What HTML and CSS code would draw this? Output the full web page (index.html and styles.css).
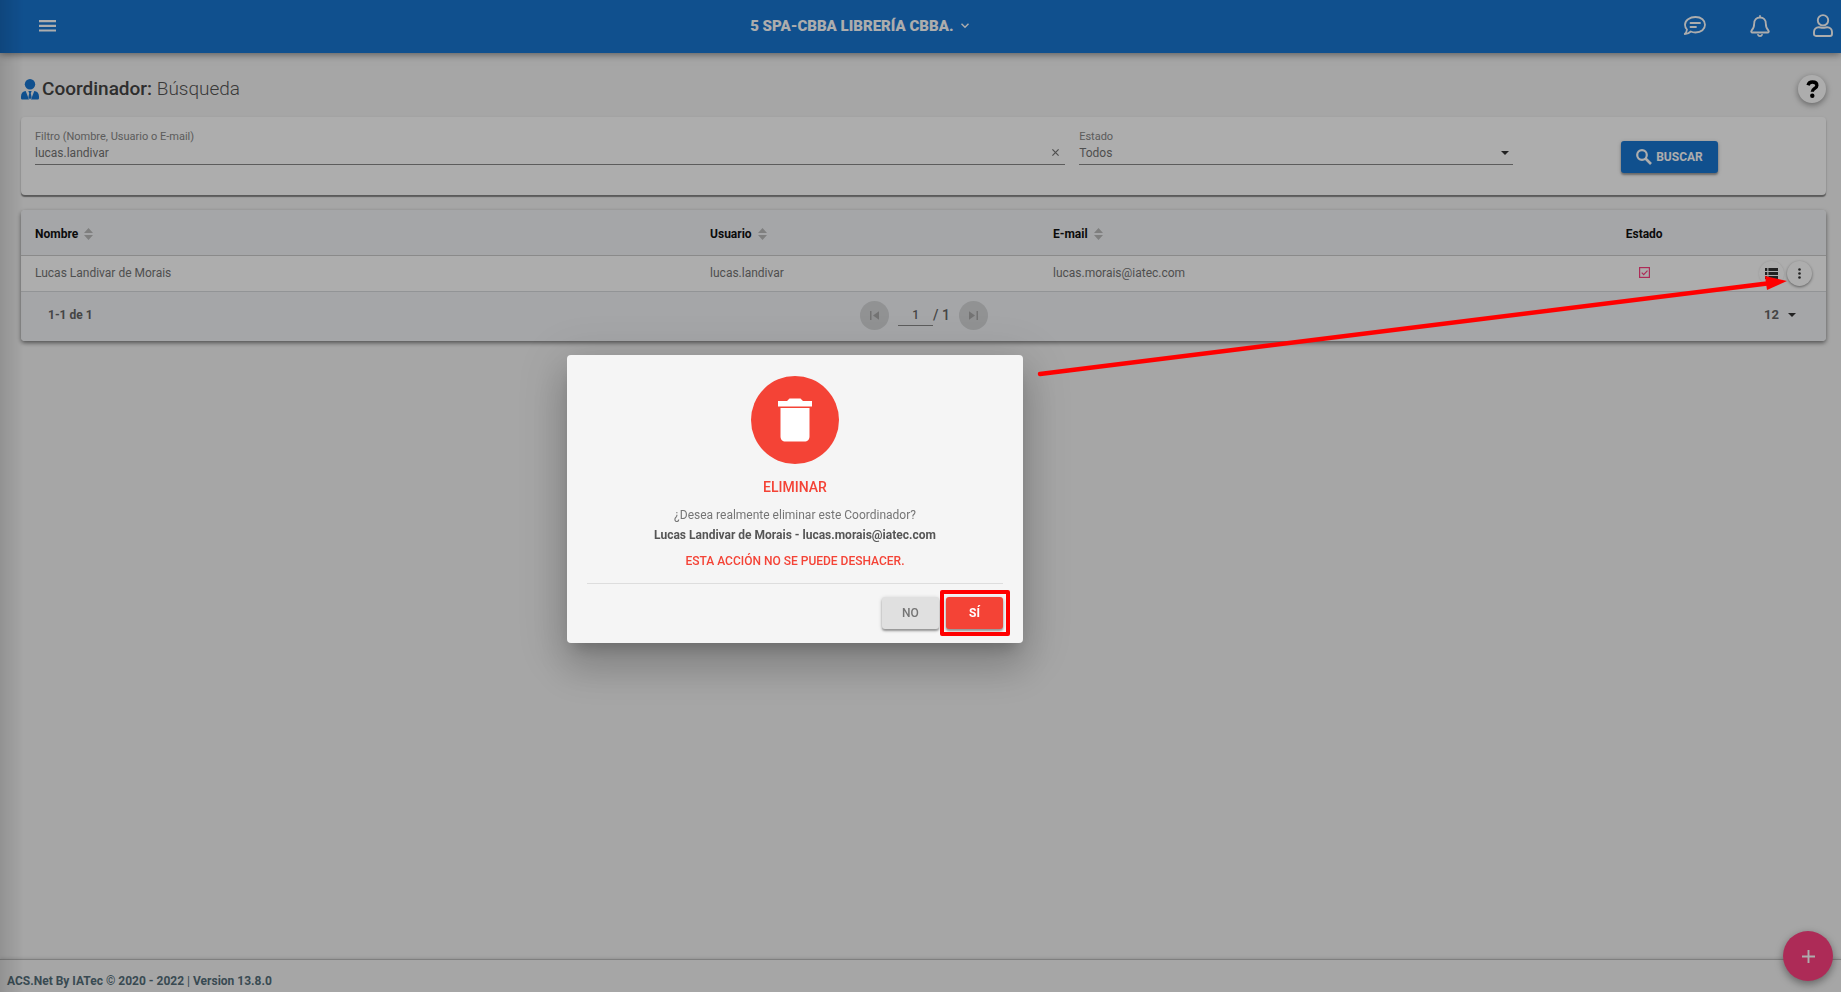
FILE: index.html
```html
<!DOCTYPE html>
<html lang="es">
<head>
<meta charset="utf-8">
<title>Coordinador: Búsqueda</title>
<link rel="stylesheet" href="styles.css">
</head>
<body>
<div class="app">
  <header class="topbar">
    <button class="icon-btn" type="button" aria-label="Menú">
      <svg width="17" height="12" viewBox="0 0 17 12" fill="currentColor"><path d="M0 0h17v2.200H0zM0 4.700h17v2.200H0zM0 9.400h17v2.200H0z"/></svg>
    </button>
    <button class="entity" type="button">5 SPA-CBBA LIBRERÍA CBBA.
      <svg width="8" height="6" viewBox="0 0 8 6" fill="none" stroke="currentColor" stroke-width="1.400"><path d="M.5.7 4 4.300 7.500.7"/></svg>
    </button>
    <nav class="tools">
      <button class="icon-btn" type="button" aria-label="Mensajes">
        <svg width="24" height="22" viewBox="0 0 24 22" fill="none" stroke="currentColor" stroke-width="1.800" stroke-linecap="round" stroke-linejoin="round"><path d="M12.500 2C18.300 2 22 5.300 22 9.700S18.300 17.500 12.500 17.500c-1.700 0-3.300-.3-4.700-1C6.300 18 4.200 19 1.800 19c1.300-1.300 2-2.900 2.200-4.500C2.700 13.100 2 11.500 2 9.700 2 5.300 6.700 2 12.500 2z"/><path d="M7.500 8h9.500M7.500 12h5.500"/></svg>
      </button>
      <button class="icon-btn" type="button" aria-label="Notificaciones">
        <svg width="20" height="22" viewBox="0 0 20 22" fill="none" stroke="currentColor" stroke-width="1.800" stroke-linecap="round" stroke-linejoin="round"><path d="M10 1v1.500M10 2.500c-3.600 0-5.800 2.600-5.800 6 0 4.300-1.300 5.700-2.600 7-.8.900-.3 2 .8 2h15.200c1.100 0 1.600-1.100.8-2-1.300-1.300-2.600-2.700-2.600-7 0-3.400-2.200-6-5.800-6zM8 19.800c.3.900 1 1.300 2 1.300s1.700-.4 2-1.300"/></svg>
      </button>
      <button class="icon-btn" type="button" aria-label="Cuenta">
        <svg width="20" height="23" viewBox="0 0 20 23" fill="none" stroke="currentColor" stroke-width="1.900" stroke-linejoin="round"><circle cx="10" cy="6.300" r="5.200"/><path d="M5.700 13.200c1.700 0 2.200.7 4.300.7s2.600-.7 4.300-.7c2.700 0 4.700 2.100 4.700 4.800v2c0 1.200-.8 2-2 2H3c-1.200 0-2-.8-2-2v-2c0-2.700 2-4.800 4.700-4.800z"/></svg>
      </button>
    </nav>
  </header>

  <main class="page">
    <div class="title-row">
      <h1 class="title">
        <svg width="18" height="21" viewBox="0 0 18 21" fill="currentColor"><circle cx="9" cy="5.300" r="5.200"/><path d="M4.700 12 8 20.500H1.500C.7 20.500 0 20 0 19v-1.600C0 14.300 2 12.200 4.700 12zM13.300 12 10 20.500h6.500c.8 0 1.500-.5 1.500-1.500v-1.600c0-3.100-2-5.200-4.700-5.400zM7.300 12h3.400l-.9 2.200.8 4-1.600 2.300-1.600-2.300.8-4z"/></svg>
        <span><b>Coordinador:</b> Búsqueda</span>
      </h1>
      <button class="help" type="button" aria-label="Ayuda">
        <svg width="13" height="18" viewBox="0 0 13 18"><path d="M2 5.200C2.600 3.100 4.200 2 6.400 2 9 2 10.900 3.300 10.900 5.400c0 3.200-4.600 2.700-4.600 6.400" fill="none" stroke="currentColor" stroke-width="3.300"/><circle cx="6.300" cy="15.700" r="2.200" fill="currentColor"/></svg>
      </button>
    </div>

    <form class="card filters">
      <div class="field">
        <label for="filter">Filtro (Nombre, Usuario o E-mail)</label>
        <div class="control">
          <input id="filter" type="text" value="lucas.landivar">
          <button class="clear" type="button" aria-label="Limpiar"><svg width="7" height="7" viewBox="0 0 7 7" stroke="currentColor" stroke-width="1.200"><path d="M.4.4l6.200 6.200M6.600.4.4 6.600"/></svg></button>
        </div>
      </div>
      <div class="field">
        <label for="state">Estado</label>
        <div class="control">
          <select id="state"><option>Todos</option></select>
          <svg class="caret" width="8" height="4" viewBox="0 0 8 4"><path d="M0 0h8L4 4z"/></svg>
        </div>
      </div>
      <button class="btn search" type="button">
        <svg width="16" height="16" viewBox="0 0 16 16" fill="none" stroke="currentColor" stroke-width="2.200"><circle cx="6" cy="6" r="4.800"/><path d="M9.500 9.500l5.500 5.500" stroke-width="2.600"/></svg>
        BUSCAR
      </button>
    </form>

    <section class="card results">
      <table>
        <thead>
          <tr>
            <th class="c-name">Nombre <svg class="sort" width="9" height="12" viewBox="0 0 9 12"><path d="M0 5 4.500 0 9 5zM0 7h9l-4.500 5z"/></svg></th>
            <th class="c-user">Usuario <svg class="sort" width="9" height="12" viewBox="0 0 9 12"><path d="M0 5 4.500 0 9 5zM0 7h9l-4.500 5z"/></svg></th>
            <th class="c-mail">E-mail <svg class="sort" width="9" height="12" viewBox="0 0 9 12"><path d="M0 5 4.500 0 9 5zM0 7h9l-4.500 5z"/></svg></th>
            <th class="c-state">Estado</th>
            <th class="c-actions"></th>
          </tr>
        </thead>
        <tbody>
          <tr>
            <td>Lucas Landivar de Morais</td>
            <td>lucas.landivar</td>
            <td>lucas.morais@iatec.com</td>
            <td class="c-state"><svg class="check" width="11" height="11" viewBox="0 0 11 11" fill="none" stroke="currentColor" stroke-width="1.200"><rect x=".6" y=".6" width="9.800" height="9.800"/><path d="M2.700 5.600l2 2 3.800-4"/></svg></td>
            <td class="c-actions">
              <div class="actions">
                <button class="round" type="button" aria-label="Detalles"><svg width="13" height="11" viewBox="0 0 13 11" fill="currentColor"><path d="M0 0h2.300v2.900H0zM0 4h2.300v2.900H0zM0 8h2.300v2.900H0zM3.400 0H13v2.900H3.400zM3.400 4H13v2.900H3.400zM3.400 8H13v2.900H3.400z"/></svg></button>
                <button class="round raised" type="button" aria-label="Más opciones"><svg width="3" height="11" viewBox="0 0 3 11" fill="currentColor"><circle cx="1.500" cy="1.500" r="1.300"/><circle cx="1.500" cy="5.500" r="1.300"/><circle cx="1.500" cy="9.500" r="1.300"/></svg></button>
              </div>
            </td>
          </tr>
        </tbody>
      </table>
      <div class="pager">
        <span class="range">1-1 de 1</span>
        <div class="pages">
          <button class="page-btn" type="button" disabled aria-label="Primera página"><svg width="9" height="9" viewBox="0 0 9 9" fill="currentColor"><path d="M0 0h1.500v9H0zM9 .3v8.400L3 4.500z"/></svg></button>
          <span class="current"><input type="text" value="1" aria-label="Página">/ 1</span>
          <button class="page-btn" type="button" disabled aria-label="Última página"><svg width="9" height="9" viewBox="0 0 9 9" fill="currentColor"><path d="M7.500 0H9v9H7.500zM0 .3v8.400l6-4.200z"/></svg></button>
        </div>
        <div class="size">
          <select aria-label="Filas por página"><option>12</option></select>
          <svg class="caret" width="8" height="4" viewBox="0 0 8 4"><path d="M0 0h8L4 4z"/></svg>
        </div>
      </div>
    </section>
  </main>

  <footer class="footer">ACS.Net By IATec © 2020 - 2022 <i>|</i> Version 13.8.0</footer>
  <button class="fab" type="button" aria-label="Agregar"><svg width="13" height="13" viewBox="0 0 13 13" stroke="currentColor" stroke-width="1.900"><path d="M0 6.500h13M6.500 0v13"/></svg></button>
</div>

<div class="backdrop"></div>

<div class="dialog" role="dialog" aria-labelledby="dlg-title">
  <div class="badge"><svg width="34" height="44" viewBox="0 0 34 44" fill="currentColor"><path d="M0 3h9l2.500-2.500h11L25 3h9v5.500H0zM2.500 10h29v28.500c0 3-2 5-5 5h-19c-3 0-5-2-5-5z"/></svg></div>
  <h2 id="dlg-title">ELIMINAR</h2>
  <p>¿Desea realmente eliminar este Coordinador?</p>
  <p class="who">Lucas Landivar de Morais - lucas.morais@iatec.com</p>
  <p class="warn">ESTA ACCIÓN NO SE PUEDE DESHACER.</p>
  <div class="dialog-actions">
    <button class="btn no" type="button">NO</button>
    <div class="highlight"><button class="btn yes" type="button">SÍ</button></div>
  </div>
</div>

<svg class="arrow" width="752" height="108" viewBox="0 0 752 108"><path d="M4 103 735 12" fill="none" stroke="#f00" stroke-width="4.400" stroke-linecap="round"/><path d="M729 5l22 5-20 9z" fill="#f00"/></svg>
</body>
</html>
```
FILE: styles.css
```css
* { box-sizing: border-box; }

body {
  margin: 0;
  font: 12px/20px Roboto, "Liberation Sans", sans-serif;
  color: #757575;
  background: #f5f5f5;
  overflow: hidden;
}

button, input, select {
  font: inherit;
  color: inherit;
  border: 0;
  padding: 0;
  margin: 0;
  background: none;
  border-radius: 0;
  appearance: none;
  outline: 0;
}

svg { display: block; flex: none; }
h1, h2, p { margin: 0; }

.app {
  min-height: 100vh;
  display: flex;
  flex-direction: column;
}

.topbar {
  height: 53px;
  display: grid;
  grid-template-columns: 14fr auto 17fr;
  align-items: center;
  padding: 0 8px 2px 39px;
  background: #1976d2;
  color: #fff;
  box-shadow: 0 1px 8px rgba(0, 0, 0, .5);
  z-index: 1;
}

.icon-btn { display: flex; }

.entity {
  display: flex;
  align-items: center;
  gap: 8px;
  font-size: 15px;
  font-weight: 900;
}

.tools {
  display: flex;
  justify-content: flex-end;
  align-items: center;
  gap: 43px;
}

.page { flex: 1; padding: 0 15px 0 21px; }

.title-row {
  height: 64px;
  display: flex;
  justify-content: space-between;
  align-items: center;
  padding-top: 8px;
}

.title {
  display: flex;
  align-items: center;
  gap: 3px;
  font-size: 19px;
  line-height: 28px;
  font-weight: 300;
  color: #555;
}

.title svg { color: #1976d2; }
.title b { font-weight: 500; color: #444; }

.help {
  width: 28px;
  height: 28px;
  display: grid;
  place-items: center;
  border-radius: 50%;
  background: #fff;
  color: #000;
  box-shadow: 0 2px 6px rgba(0, 0, 0, .4);
}

.card {
  background: #fff;
  border-radius: 4px;
}

.filters {
  height: 78px;
  display: grid;
  grid-template-columns: 589fr 248fr 163fr;
  gap: 14px;
  padding: 12px 14px 0;
  box-shadow: 0 2px 1px rgba(0, 0, 0, .4), 0 1px 3px rgba(0, 0, 0, .15);
}

.field label {
  display: block;
  font-size: 11px;
  line-height: 16px;
  color: #888;
}

.control {
  display: flex;
  align-items: center;
  height: 20px;
  padding-bottom: 4px;
  border-bottom: 1px solid #888;
}

.control input, .control select { flex: 1; min-width: 0; height: 16px; line-height: 16px; }
.clear { padding: 0 6px; }
.caret { fill: #333; }
.control .caret { margin-right: 4px; }

.btn {
  height: 32px;
  display: flex;
  align-items: center;
  justify-content: center;
  border-radius: 3px;
  font-weight: 700;
  box-shadow: 0 2px 2px rgba(0, 0, 0, .3), 0 1px 4px rgba(0, 0, 0, .2);
}

.search {
  width: 97px;
  gap: 4px;
  margin-top: 12px;
  justify-self: center;
  background: #1976d2;
  color: #fff;
}

.results {
  margin-top: 15px;
  overflow: hidden;
  box-shadow: 0 2px 4px rgba(0, 0, 0, .5);
}

table { width: 100%; border-collapse: collapse; table-layout: fixed; }
th, td { padding: 0 14px; text-align: left; }

th {
  height: 45px;
  padding-top: 3px;
  font-weight: 700;
  color: #111;
  background: #f3f5f8;
  border-bottom: 1px solid #ccc;
}

td { height: 36px; border-bottom: 1px solid #d8dadd; }

.sort { display: inline-block; vertical-align: -2px; margin-left: 3px; fill: #bbb; }
.c-name { width: 37.4%; }
.c-user { width: 19%; }
.c-mail { width: 28%; }
.c-state { text-align: center; }
.c-actions { width: 82px; padding: 0; }
.check { display: inline-block; vertical-align: -1px; color: #ff4081; }
.actions { display: flex; gap: 3px; padding-left: 15px; }

.round {
  width: 25px;
  height: 25px;
  display: grid;
  place-items: center;
  border-radius: 50%;
  color: #333;
  background: #fff;
  box-shadow: 0 0 2px rgba(0, 0, 0, .15);
}

.raised { box-shadow: 0 1px 3px rgba(0, 0, 0, .45); }

.pager {
  height: 49px;
  display: grid;
  grid-template-columns: 1fr auto 1fr;
  align-items: center;
  padding: 0 26px 2px 27px;
  background: #f3f5f8;
  font-weight: 700;
  color: #666;
}

.pages, .current { display: flex; align-items: center; }
.pages { gap: 9px; }
.current { font-weight: 500; font-size: 14px; }

.current input {
  width: 35px;
  height: 22px;
  border-bottom: 1px solid #888;
  text-align: center;
  font-size: 12px;
}

.page-btn {
  width: 29px;
  height: 29px;
  display: grid;
  place-items: center;
  border-radius: 50%;
  background: #d6d7d9;
  color: #aaa;
}

.size {
  display: flex;
  align-items: center;
  justify-content: flex-end;
  gap: 9px;
  padding-right: 4px;
  font-size: 13px;
}

.footer {
  height: 33px;
  padding: 11px 7px 0;
  border-top: 1px solid #bbb;
  box-shadow: 0 -1px 3px rgba(0, 0, 0, .12);
  font-weight: 700;
  color: #546e7a;
}

.footer i { font-style: normal; font-weight: 400; }

.fab {
  position: fixed;
  right: 8px;
  bottom: 11px;
  width: 50px;
  height: 50px;
  display: grid;
  place-items: center;
  border-radius: 50%;
  background: #ff4081;
  color: #fff;
  box-shadow: 0 3px 8px rgba(0, 0, 0, .4);
}

.backdrop {
  position: fixed;
  inset: 0;
  z-index: 2;
  background: linear-gradient(90deg, rgba(0, 0, 0, .12), transparent 24px), rgba(0, 0, 0, .32);
}

.dialog {
  position: absolute;
  z-index: 3;
  left: 567px;
  top: 355px;
  width: 456px;
  padding: 21px 20px 14px;
  border-radius: 4px;
  background: #f5f5f5;
  text-align: center;
  box-shadow: 0 11px 15px -7px rgba(0, 0, 0, .2), 0 24px 38px 3px rgba(0, 0, 0, .14), 0 9px 46px 8px rgba(0, 0, 0, .12);
}

.badge {
  width: 88px;
  height: 88px;
  display: grid;
  place-items: center;
  margin: 0 auto 13px;
  border-radius: 50%;
  background: #f44336;
  color: #fff;
}

.dialog h2 { font-size: 14px; line-height: 20px; font-weight: 500; color: #f44336; margin-bottom: 8px; }
.dialog .who { font-weight: 700; color: #555; }
.dialog .warn { font-weight: 500; color: #f44336; margin-top: 6px; }

.dialog-actions {
  display: flex;
  justify-content: flex-end;
  gap: 7px;
  margin-top: 12px;
  padding-top: 13px;
  border-top: 1px solid #ddd;
}

.dialog .btn { width: 57px; }
.no { background: #e0e0e0; font-weight: 500; }
.yes { background: #f44336; color: #fff; }
.highlight { position: relative; }

.highlight::after {
  content: "";
  position: absolute;
  inset: -7px -7px -7px -6px;
  border: 4px solid #f00;
  border-radius: 2px;
}

.arrow { position: absolute; z-index: 4; left: 1036px; top: 271px; }
```
